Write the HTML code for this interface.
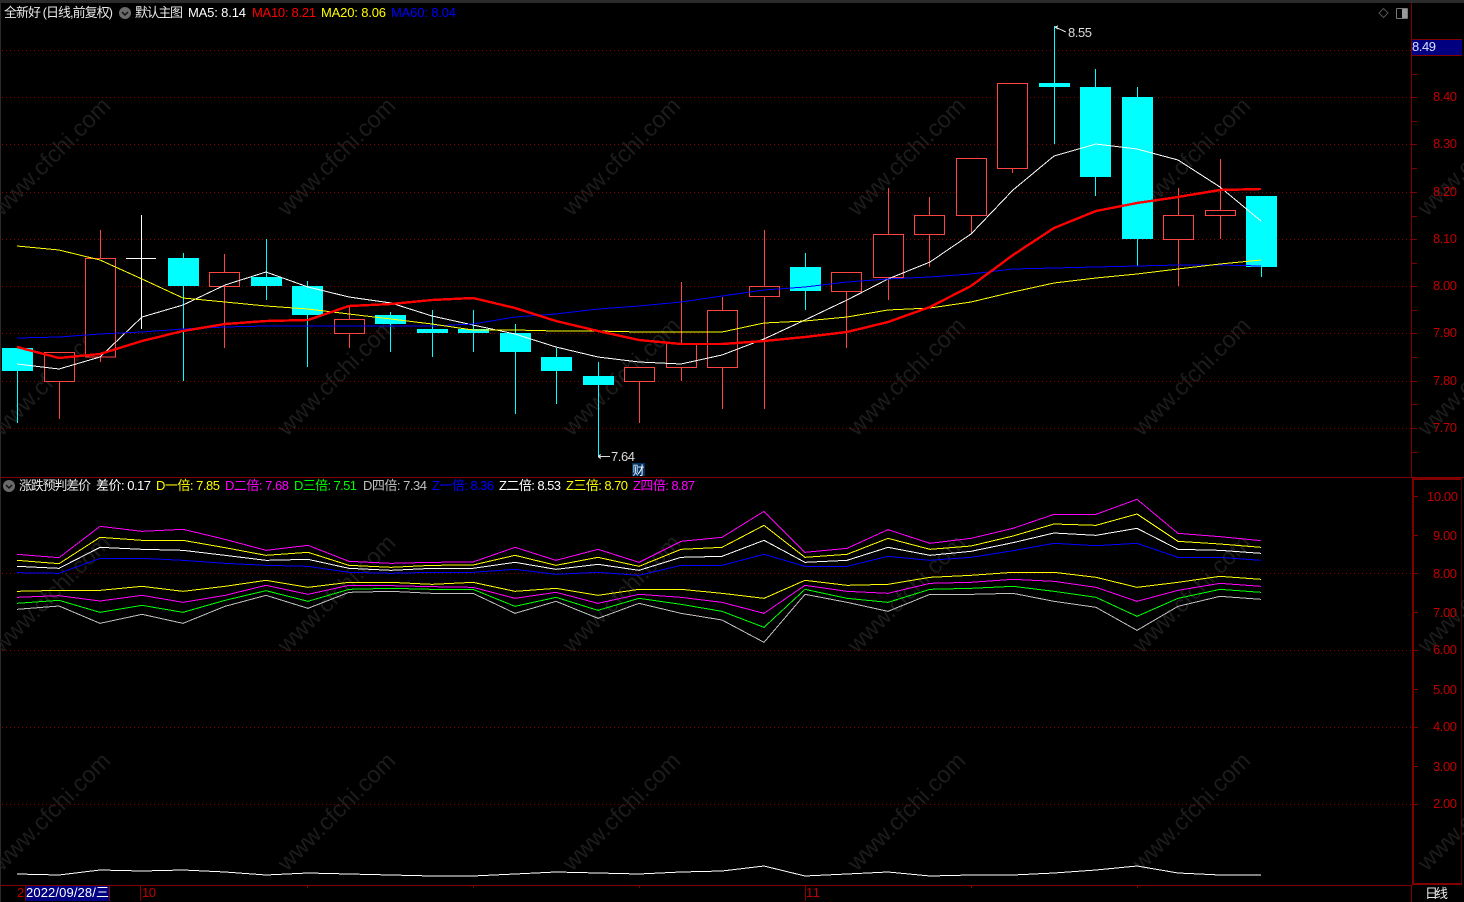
<!DOCTYPE html>
<html><head><meta charset="utf-8"><style>
html,body{margin:0;padding:0;background:#000;width:1464px;height:902px;overflow:hidden}
svg{display:block;position:absolute;left:0;top:0}
text{font-family:"Liberation Sans","Noto Sans CJK SC",sans-serif;font-size:13px}
.wm text{font-size:23.5px;fill:#1c1c1c}
.ax text{fill:#c00000}
.g{stroke:#8b0000;stroke-width:1;stroke-dasharray:1 3;fill:none}
.k{stroke:#ff4444;fill:#000;stroke-width:1}
.w{stroke:#ff4444;stroke-width:1}
.c{fill:#00ffff}
.cw{stroke:#00ffff;stroke-width:1}
polyline{fill:none;stroke-width:1;vector-effect:non-scaling-stroke}
</style></head><body>
<svg width="1464" height="902" viewBox="0 0 1464 902" shape-rendering="crispEdges">
<rect width="1464" height="902" fill="#000"/>
<rect x="0" y="0" width="1464" height="3" fill="#2b2b2b"/>
<rect x="0" y="0" width="1" height="902" fill="#2b2b2b"/>

<g class="wm">
<text transform="translate(2,217) rotate(-45)">www.cfchi.com</text><text transform="translate(287,217) rotate(-45)">www.cfchi.com</text><text transform="translate(572,217) rotate(-45)">www.cfchi.com</text><text transform="translate(857,217) rotate(-45)">www.cfchi.com</text><text transform="translate(1142,217) rotate(-45)">www.cfchi.com</text><text transform="translate(1427,217) rotate(-45)">www.cfchi.com</text>
<text transform="translate(2,437) rotate(-45)">www.cfchi.com</text><text transform="translate(287,437) rotate(-45)">www.cfchi.com</text><text transform="translate(572,437) rotate(-45)">www.cfchi.com</text><text transform="translate(857,437) rotate(-45)">www.cfchi.com</text><text transform="translate(1142,437) rotate(-45)">www.cfchi.com</text><text transform="translate(1427,437) rotate(-45)">www.cfchi.com</text>
<text transform="translate(2,654) rotate(-45)">www.cfchi.com</text><text transform="translate(287,654) rotate(-45)">www.cfchi.com</text><text transform="translate(572,654) rotate(-45)">www.cfchi.com</text><text transform="translate(857,654) rotate(-45)">www.cfchi.com</text><text transform="translate(1142,654) rotate(-45)">www.cfchi.com</text><text transform="translate(1427,654) rotate(-45)">www.cfchi.com</text>
<text transform="translate(2,872) rotate(-45)">www.cfchi.com</text><text transform="translate(287,872) rotate(-45)">www.cfchi.com</text><text transform="translate(572,872) rotate(-45)">www.cfchi.com</text><text transform="translate(857,872) rotate(-45)">www.cfchi.com</text><text transform="translate(1142,872) rotate(-45)">www.cfchi.com</text><text transform="translate(1427,872) rotate(-45)">www.cfchi.com</text>
</g>

<!-- grid -->
<g class="g">
<path d="M2 50.5H1411M2 97.5H1411M2 144.5H1411M2 192.5H1411M2 239.5H1411M2 286.5H1411M2 333.5H1411M2 381.5H1411M2 428.5H1411"/>
<path d="M2 573.5H1411M2 650.5H1411M2 727.5H1411M2 804.5H1411"/>
</g>

<!-- frame lines -->
<g fill="#800000">
<rect x="1411" y="3" width="1" height="474"/>
<rect x="0" y="477" width="1464" height="1"/>
<rect x="1412" y="478" width="50" height="2"/>
<rect x="1412" y="478" width="2" height="407"/>
<rect x="1461" y="478" width="1" height="407" opacity=".6"/>
<rect x="1412" y="883" width="50" height="2"/>
<rect x="0" y="885" width="1412" height="1"/>
<rect x="1411" y="885" width="1" height="17"/>
<!-- main axis ticks -->
<path d="M1412 50h5v1h-5zM1412 74h5v1h-5zM1412 97h5v1h-5zM1412 121h5v1h-5zM1412 144h5v1h-5zM1412 168h5v1h-5zM1412 192h5v1h-5zM1412 216h5v1h-5zM1412 239h5v1h-5zM1412 263h5v1h-5zM1412 286h5v1h-5zM1412 310h5v1h-5zM1412 333h5v1h-5zM1412 357h5v1h-5zM1412 381h5v1h-5zM1412 404h5v1h-5zM1412 428h5v1h-5zM1412 452h5v1h-5z"/>
<!-- sub axis ticks -->
<path d="M1414 496h4v1h-4zM1414 535h4v1h-4zM1414 573h4v1h-4zM1414 612h4v1h-4zM1414 650h4v1h-4zM1414 689h4v1h-4zM1414 727h4v1h-4zM1414 766h4v1h-4zM1414 804h4v1h-4z"/>
<!-- bottom ticks -->
<rect x="25" y="885" width="1" height="16"/>
<rect x="140" y="885" width="1" height="16"/>
<rect x="805" y="885" width="1" height="16"/>
<path d="M307 886h1v2h-1zM473 886h1v2h-1zM639 886h1v2h-1zM971 886h1v2h-1zM1137 886h1v2h-1z"/>
</g>

<!-- candles -->
<g>
<line class="cw" x1="17.5" y1="371" x2="17.5" y2="423"/><rect class="c" x="2" y="348" width="31" height="23"/>
<line class="w" x1="59.5" y1="381" x2="59.5" y2="419"/><rect class="k" x="44.5" y="352.5" width="30" height="29"/>
<line class="w" x1="100.5" y1="230" x2="100.5" y2="362"/><rect class="k" x="85.5" y="258.5" width="30" height="98.5"/>
<line stroke="#fff" x1="141.5" y1="215" x2="141.5" y2="329"/><line stroke="#fff" x1="126" y1="258.5" x2="156" y2="258.5"/>
<line class="cw" x1="183.5" y1="253" x2="183.5" y2="381"/><rect class="c" x="168" y="258" width="31" height="28"/>
<line class="w" x1="224.5" y1="254" x2="224.5" y2="348"/><rect class="k" x="209.5" y="272.5" width="30" height="14"/>
<line class="cw" x1="266.5" y1="239" x2="266.5" y2="300"/><rect class="c" x="251" y="277" width="31" height="9"/>
<line class="cw" x1="307.5" y1="281" x2="307.5" y2="367"/><rect class="c" x="292" y="286" width="31" height="29"/>
<line class="w" x1="349.5" y1="307" x2="349.5" y2="348"/><rect class="k" x="334.5" y="319.5" width="30" height="14"/>
<line class="cw" x1="390.5" y1="312" x2="390.5" y2="352"/><rect class="c" x="375" y="315" width="31" height="9"/>
<line class="cw" x1="432.5" y1="310" x2="432.5" y2="357"/><rect class="c" x="417" y="329" width="31" height="4"/>
<line class="cw" x1="473.5" y1="310" x2="473.5" y2="352"/><rect class="c" x="458" y="329" width="31" height="4"/>
<line class="cw" x1="515.5" y1="324" x2="515.5" y2="414"/><rect class="c" x="500" y="333" width="31" height="19"/>
<line class="cw" x1="556.5" y1="348" x2="556.5" y2="404"/><rect class="c" x="541" y="357" width="31" height="14"/>
<line class="cw" x1="598.5" y1="362" x2="598.5" y2="456"/><rect class="c" x="583" y="376" width="31" height="9"/>
<line class="w" x1="639.5" y1="381" x2="639.5" y2="423"/><rect class="k" x="624.5" y="367.5" width="30" height="14"/>
<line class="w" x1="681.5" y1="282" x2="681.5" y2="381"/><rect class="k" x="666.5" y="343.5" width="30" height="24"/>
<line class="w" x1="722.5" y1="297" x2="722.5" y2="409"/><rect class="k" x="707.5" y="310.5" width="30" height="57"/>
<line class="w" x1="764.5" y1="230" x2="764.5" y2="409"/><rect class="k" x="749.5" y="286.5" width="30" height="10"/>
<line class="cw" x1="805.5" y1="253" x2="805.5" y2="310"/><rect class="c" x="790" y="267" width="31" height="24"/>
<line class="w" x1="846.5" y1="291" x2="846.5" y2="348"/><rect class="k" x="831.5" y="272.5" width="30" height="19"/>
<line class="w" x1="888.5" y1="188" x2="888.5" y2="300"/><rect class="k" x="873.5" y="234.5" width="30" height="43"/>
<line class="w" x1="929.5" y1="197" x2="929.5" y2="267"/><rect class="k" x="914.5" y="215.5" width="30" height="19"/>
<line class="w" x1="971.5" y1="215" x2="971.5" y2="234"/><rect class="k" x="956.5" y="158.5" width="30" height="57"/>
<line class="w" x1="1012.5" y1="168" x2="1012.5" y2="173"/><rect class="k" x="997.5" y="83.5" width="30" height="85"/>
<line class="cw" x1="1054.5" y1="26" x2="1054.5" y2="144"/><rect class="c" x="1039" y="83" width="31" height="4"/>
<line class="cw" x1="1095.5" y1="69" x2="1095.5" y2="196"/><rect class="c" x="1080" y="87" width="31" height="90"/>
<line class="cw" x1="1137.5" y1="87" x2="1137.5" y2="266"/><rect class="c" x="1122" y="97" width="31" height="142"/>
<line class="w" x1="1178.5" y1="188" x2="1178.5" y2="286"/><rect class="k" x="1163.5" y="215.5" width="30" height="24"/>
<line class="w" x1="1220.5" y1="159" x2="1220.5" y2="239"/><rect class="k" x="1205.5" y="210.5" width="30" height="5"/>
<line class="cw" x1="1261.5" y1="267" x2="1261.5" y2="277"/><rect class="c" x="1246" y="196" width="31" height="71"/>
</g>

<!-- MA lines -->
<polyline stroke="#fff" points="17,364 59,369 100,357 142,317 183,305 225,285 266,272 308,287 349,297 391,303 432,316 473,325 515,334 556,347 598,357 639,362 681,364 722,355 764,339 805,320 847,300 888,279 930,262 971,234 1013,190 1054,156 1096,144 1137,149 1178,160 1220,187 1261,221"/>
<polyline stroke="#0000ff" points="17,338 59,337 100,334 142,332 183,329 225,327 266,326 308,326 349,326 391,326 432,326 473,324 515,317 556,314 598,309 639,306 681,302 722,296 764,290 805,287 847,282 888,279 930,277 971,274 1013,269 1054,268 1096,267 1137,266 1178,265 1220,265 1261,266"/>
<polyline stroke="#ffff00" points="17,246 59,250 100,260 142,279 183,298 225,302 266,306 308,309 349,314 391,319 432,324 473,330 515,330 556,331 598,331 639,332 681,332 722,332 764,323 805,321 847,317 888,310 930,308 971,302 1013,292 1054,283 1096,278 1137,274 1178,269 1220,264 1261,260"/>
<polyline stroke="#ff0000" style="stroke-width:2.4" points="17,347 59,358 100,354 142,341 183,331 225,324 266,321 308,320 349,306 391,304 432,300 473,298 515,308 556,321 598,331 639,340 681,344 722,344 764,341 805,337 847,332 888,322 930,307 971,286 1013,255 1054,228 1096,211 1137,203 1178,197 1220,190 1261,189"/>

<!-- sub pane lines -->
<g transform="translate(0,470) scale(1,.33333)">
<polyline stroke="#ff00ff" points="17,253 59,263 100,169 142,184 183,178 225,208 266,241 308,226 349,274 391,280 432,277 473,276 515,232 556,271 598,238 639,277 681,214 722,202 764,124 805,247 847,235 888,179 930,220 971,205 1013,175 1054,133 1096,133 1137,88 1178,190 1220,200 1261,212"/>
<polyline stroke="#ffff00" points="17,271 59,281 100,202 142,211 183,211 225,233 266,256 308,247 349,286 391,292 432,286 473,285 515,256 556,286 598,262 639,289 681,238 722,232 764,166 805,262 847,253 888,205 930,238 971,228 1013,198 1054,162 1096,166 1137,132 1178,214 1220,222 1261,232"/>
<polyline stroke="#ffffff" points="17,289 59,295 100,232 142,238 183,241 225,256 266,271 308,268 349,295 391,301 432,295 473,295 515,277 556,298 598,283 639,301 681,262 722,259 764,211 805,277 847,271 888,232 930,256 971,244 1013,218 1054,189 1096,196 1137,175 1178,238 1220,241 1261,250"/>
<polyline stroke="#0000ff" points="17,308 59,310 100,265 142,265 183,271 225,280 266,286 308,289 349,307 391,310 432,307 473,307 515,298 556,313 598,307 639,316 681,286 722,286 764,253 805,289 847,289 888,259 930,271 971,262 1013,242 1054,220 1096,227 1137,220 1178,262 1220,262 1261,271"/>
<polyline stroke="#ffff00" points="17,364 59,361 100,361 142,349 183,364 225,349 266,331 308,352 349,337 391,337 432,343 473,337 515,364 556,355 598,376 639,358 681,358 722,370 764,385 805,331 847,346 888,343 930,322 971,316 1013,307 1054,307 1096,322 1137,352 1178,337 1220,319 1261,328"/>
<polyline stroke="#ff00ff" points="17,382 59,377 100,393 142,376 183,397 225,376 266,346 308,373 349,346 391,347 432,350 473,352 515,385 556,367 598,400 639,373 681,382 722,397 764,430 805,346 847,364 888,370 930,340 971,337 1013,328 1054,334 1096,352 1137,394 1178,361 1220,340 1261,349"/>
<polyline stroke="#00ff00" points="17,400 59,391 100,427 142,406 183,427 225,391 266,362 308,394 349,358 391,355 432,358 473,358 515,409 556,382 598,421 639,385 681,403 722,424 764,472 805,358 847,385 888,397 930,358 971,355 1013,349 1054,364 1096,382 1137,439 1178,385 1220,358 1261,367"/>
<polyline stroke="#c0c0c0" points="17,418 59,408 100,460 142,433 183,460 225,409 266,376 308,415 349,367 391,364 432,370 473,370 515,430 556,394 598,445 639,400 681,430 722,450 764,517 805,373 847,397 888,424 930,373 971,373 1013,370 1054,394 1096,412 1137,481 1178,409 1220,379 1261,388"/>
</g>
<polyline stroke="#ffffff" points="17,874 59,875 100,870 142,871 183,870 225,872 266,875 308,873 349,874 391,875 432,876 473,876 515,874 556,872 598,873 639,874 681,872 722,871 764,866 805,876 847,874 888,872 930,876 971,875 1013,875 1054,873 1096,870 1137,866 1178,873 1220,875 1261,875"/>

<!-- annotations -->
<path d="M1055 27L1066 32M1055 27l3-1M1055 27l3 2" stroke="#ddd" fill="none"/>
<path d="M598 456.5H610M598 456.5l3-2M598 456.5l3 2" stroke="#ddd" fill="none"/>
<text x="1068" y="37" fill="#ddd" textLength="24">8.55</text>
<text x="611" y="461" fill="#ddd" textLength="24">7.64</text>
<rect x="632" y="463" width="13" height="13" fill="#003366"/>
<text x="632.5" y="474.5" fill="#fff" style="font-size:12px">财</text>

<!-- top legend -->
<text x="4" y="17" fill="#e8e8e8" textLength="109">全新好 (日线,前复权)</text>
<circle cx="125" cy="13" r="6" fill="#6a6a6a" shape-rendering="auto"/>
<path d="M122 12l3 3 3-3" stroke="#111" stroke-width="1.5" fill="none" shape-rendering="auto"/>
<text x="135" y="17" fill="#e8e8e8" textLength="48">默认主图</text>
<text x="188" y="17" fill="#fff" textLength="58">MA5: 8.14</text>
<text x="252" y="17" fill="#ff0000" textLength="64">MA10: 8.21</text>
<text x="321" y="17" fill="#ffff00" textLength="65">MA20: 8.06</text>
<text x="391" y="17" fill="#0000ff" textLength="65">MA60: 8.04</text>

<!-- top right icons -->
<path d="M1383.5 8.5l4.5 4.5-4.5 4.5-4.5-4.5z" stroke="#555" fill="none" shape-rendering="auto"/>
<rect x="1396.5" y="8.5" width="11" height="10" rx="1" stroke="#777" fill="none"/>
<rect x="1402" y="9" width="5" height="9" fill="#999"/>

<!-- sub legend -->
<circle cx="9" cy="486" r="6" fill="#6a6a6a" shape-rendering="auto"/>
<path d="M6 485l3 3 3-3" stroke="#111" stroke-width="1.5" fill="none" shape-rendering="auto"/>
<text x="19" y="490" fill="#e8e8e8" textLength="72">涨跌预判差价</text>
<text x="96" y="490" fill="#fff" textLength="55">差价: 0.17</text>
<text x="156" y="490" fill="#ffff00" textLength="64">D一倍: 7.85</text>
<text x="225" y="490" fill="#ff00ff" textLength="64">D二倍: 7.68</text>
<text x="294" y="490" fill="#00ff00" textLength="63">D三倍: 7.51</text>
<text x="363" y="490" fill="#c0c0c0" textLength="64">D四倍: 7.34</text>
<text x="432" y="490" fill="#0000ff" textLength="62">Z一倍: 8.36</text>
<text x="499" y="490" fill="#fff" textLength="62">Z二倍: 8.53</text>
<text x="566" y="490" fill="#ffff00" textLength="62">Z三倍: 8.70</text>
<text x="633" y="490" fill="#ff00ff" textLength="62">Z四倍: 8.87</text>

<!-- price box -->
<rect x="1412" y="40" width="50" height="15" fill="#000080"/>
<rect x="1412" y="39" width="50" height="1" fill="#800000"/>
<rect x="1412" y="55" width="50" height="1" fill="#800000"/>
<text x="1412" y="51" fill="#d8e0ff" textLength="24">8.49</text>

<!-- axis labels -->
<g class="ax">
<text x="1433" y="101" textLength="24">8.40</text>
<text x="1433" y="148" textLength="24">8.30</text>
<text x="1433" y="196" textLength="24">8.20</text>
<text x="1433" y="243" textLength="24">8.10</text>
<text x="1433" y="290" textLength="24">8.00</text>
<text x="1433" y="337" textLength="24">7.90</text>
<text x="1433" y="385" textLength="24">7.80</text>
<text x="1433" y="432" textLength="24">7.70</text>
<text x="1427" y="501" textLength="31">10.00</text>
<text x="1433" y="540" textLength="24">9.00</text>
<text x="1433" y="578" textLength="24">8.00</text>
<text x="1433" y="617" textLength="24">7.00</text>
<text x="1433" y="654" textLength="24">6.00</text>
<text x="1433" y="694" textLength="24">5.00</text>
<text x="1433" y="731" textLength="24">4.00</text>
<text x="1433" y="771" textLength="24">3.00</text>
<text x="1433" y="808" textLength="24">2.00</text>
<text x="17" y="897">2</text>
<text x="142" y="897" textLength="14">10</text>
<text x="806" y="897" textLength="14">11</text>
</g>

<!-- date box -->
<rect x="26" y="886" width="83" height="15" fill="#000080"/>
<rect x="109" y="886" width="1" height="15" fill="#800000"/>
<text x="26" y="897" fill="#fff" textLength="83">2022/09/28/三</text>

<text x="1425" y="898" fill="#e8e8e8" textLength="23">日线</text>
</svg>
</body></html>
